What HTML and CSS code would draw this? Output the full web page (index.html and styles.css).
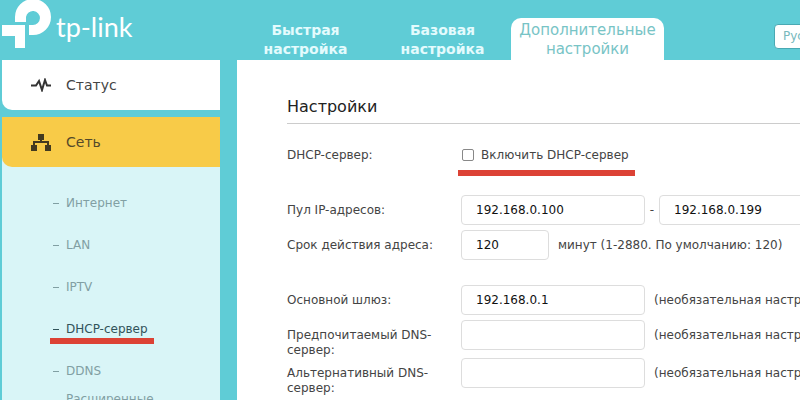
FILE: index.html
```
<!DOCTYPE html>
<html lang="ru">
<head>
    <meta charset="UTF-8">
    <meta name="viewport" content="width=device-width, initial-scale=1.0">
    <title>tp-link - DHCP-сервер</title>
    <link rel="stylesheet" href="styles.css">
</head>
<body>

    <header class="header">
        <a class="logo" href="#">
            <svg class="logo-mark" width="50" height="48" viewBox="0 0 50 48" aria-hidden="true">
                <path d="M13 22V17A18 18 0 1 1 31 35H27V25H31A7 7 0 1 0 24 17V22Z" fill="#fff"/>
                <path d="M0 25H23V48H13V36H0Z" fill="#fff"/>
            </svg>
            <span class="logo-text">tp-link</span>
        </a>
        <nav class="tabs">
            <a class="tab" href="#">Быстрая настройка</a>
            <a class="tab" href="#">Базовая настройка</a>
            <a class="tab active" href="#">Дополнительные настройки</a>
        </nav>
        <button class="language" type="button">Русский</button>
    </header>

    <div class="page">
        <aside class="sidebar">
            <a class="menu-item" href="#">
                <svg width="20" height="14" viewBox="0 0 20 14" aria-hidden="true">
                    <path d="M0 7.500H5L8 3L11 12L14 2L16 7.500H20" fill="none" stroke="#333" stroke-width="2"/>
                </svg>
                Статус
            </a>
            <div class="menu-group">
                <a class="menu-item open" href="#">
                    <svg width="20" height="18" viewBox="0 0 20 18" aria-hidden="true">
                        <path d="M10 5V9M3 13V9H17V13" fill="none" stroke="#433a20" stroke-width="2"/>
                        <path d="M7 1H13V7H7ZM0 12H6V18H0ZM14 12H20V18H14Z" fill="#433a20"/>
                    </svg>
                    Сеть
                </a>
                <ul class="submenu">
                    <li><a href="#">Интернет</a></li>
                    <li><a href="#">LAN</a></li>
                    <li><a href="#">IPTV</a></li>
                    <li class="current"><a href="#">DHCP-сервер</a></li>
                    <li><a href="#">DDNS</a></li>
                    <li class="long"><a href="#">Расширенные настройки</a></li>
                </ul>
            </div>
        </aside>

        <main class="content">
            <h1>Настройки</h1>
            <form>
                <div class="row row-spaced">
                    <span class="label">DHCP-сервер:</span>
                    <label class="check marked"><input type="checkbox"> Включить DHCP-сервер</label>
                </div>
                <div class="row">
                    <label class="label" for="pool-start">Пул IP-адресов:</label>
                    <input class="field" id="pool-start" type="text" value="192.168.0.100">
                    <span class="dash">-</span>
                    <input class="field" type="text" value="192.168.0.199" aria-label="Конец пула">
                </div>
                <div class="row row-spaced">
                    <label class="label" for="lease">Срок действия адреса:</label>
                    <input class="field short" id="lease" type="text" value="120">
                    <span class="note">минут (1-2880. По умолчанию: 120)</span>
                </div>
                <div class="row">
                    <label class="label" for="gateway">Основной шлюз:</label>
                    <input class="field" id="gateway" type="text" value="192.168.0.1">
                    <span class="note">(необязательная настройка)</span>
                </div>
                <div class="row">
                    <label class="label" for="dns1">Предпочитаемый DNS-сервер:</label>
                    <input class="field" id="dns1" type="text">
                    <span class="note">(необязательная настройка)</span>
                </div>
                <div class="row">
                    <label class="label" for="dns2">Альтернативный DNS-сервер:</label>
                    <input class="field" id="dns2" type="text">
                    <span class="note">(необязательная настройка)</span>
                </div>
            </form>
        </main>
    </div>

</body>
</html>
```
FILE: styles.css
```
* {
    box-sizing: border-box;
}
body {
    margin: 0;
    height: 100vh;
    display: flex;
    flex-direction: column;
    overflow: hidden;
    background: #5fccd6;
    color: #444;
    font-family: Verdana, "DejaVu Sans", sans-serif;
    font-size: 12px;
    line-height: 15px;
}
a {
    color: inherit;
    text-decoration: none;
}
.header {
    display: flex;
    flex: none;
    height: 60px;
    white-space: nowrap;
}
.logo {
    display: flex;
    flex: none;
    width: 237px;
    padding-left: 2px;
    gap: 4px;
    color: #fff;
}
.logo-mark {
    flex: none;
}
.logo-text {
    padding-top: 12px;
    font-family: Lato, sans-serif;
    font-size: 27px;
    line-height: 30px;
}
.tabs {
    display: flex;
    flex: none;
    align-items: flex-end;
}
.tab {
    width: 137px;
    height: 42px;
    padding-top: 3px;
    color: #e4fbfd;
    font-size: 14px;
    font-weight: bold;
    line-height: 19px;
    text-align: center;
    white-space: normal;
}
.tab.active {
    width: 153px;
    border-radius: 10px 10px 0 0;
    background: #fff;
    color: #78c4c6;
    font-size: 15px;
    font-weight: normal;
}
.language {
    flex: none;
    width: 90px;
    height: 25px;
    margin: 24px 0 0 110px;
    padding: 0 8px;
    border: 1px solid #4aa9b3;
    border-radius: 4px;
    background: #fff;
    color: #78b9bd;
    font: inherit;
    text-align: left;
}
.page {
    display: flex;
    flex: 1;
    gap: 17px;
    min-height: 0;
    padding-left: 2px;
}
.sidebar {
    display: flex;
    flex: none;
    flex-direction: column;
    gap: 7px;
    width: 218px;
}
.menu-item {
    display: flex;
    flex: none;
    align-items: center;
    gap: 15px;
    height: 50px;
    padding-left: 29px;
    border-radius: 0 0 0 10px;
    background: #fff;
    color: #444;
    font-size: 14px;
}
.menu-item.open {
    background: #f8cb48;
    color: #54492a;
}
.menu-group {
    flex: 1;
    background: #d9f5f7;
}
.submenu {
    margin: 0;
    padding: 15px 0 0 51px;
    list-style: none;
    color: #819fa3;
}
.submenu li {
    display: flex;
    align-items: center;
    gap: 7px;
    height: 42px;
}
.submenu li::before {
    content: "";
    width: 6px;
    height: 1px;
    background: currentColor;
}
.submenu a {
    width: 90px;
}
.submenu .current {
    position: relative;
    color: #31535a;
}
.submenu .current::after,
.marked::after {
    content: "";
    position: absolute;
    left: -3px;
    right: -6px;
    top: 30px;
    height: 6px;
    background: #dc4235;
}
.submenu .current::after {
    right: auto;
    width: 104px;
}
.submenu .long {
    align-items: flex-start;
}
.submenu .long::before {
    background: transparent;
}
.content {
    flex: 1;
    min-width: 0;
    padding: 35px 0 0 50px;
    overflow: hidden;
    background: #fff;
}
h1 {
    margin: 0 0 16px;
    padding-bottom: 4px;
    border-bottom: 1px solid #ccc;
    color: #222;
    font-size: 16px;
    font-weight: normal;
    line-height: 24px;
}
.row {
    display: flex;
    align-items: flex-start;
    min-height: 35px;
    white-space: nowrap;
}
.row-spaced {
    margin-bottom: 20px;
}
.label {
    flex: none;
    width: 174px;
    padding: 8px 24px 0 0;
    white-space: normal;
}
.check {
    position: relative;
    display: flex;
    align-items: center;
    gap: 7px;
    height: 30px;
}
.check input {
    appearance: none;
    width: 12px;
    height: 12px;
    margin: 0 0 0 1px;
    border: 1px solid #888;
    border-radius: 2px;
    background: #fff;
}
.check input:checked {
    background: #5fccd6;
}
.field {
    flex: none;
    width: 184px;
    height: 30px;
    padding: 0 14px;
    border: 1px solid #ddd;
    border-radius: 4px;
    background: #fff;
    color: #111;
    font: inherit;
}
.field.short {
    width: 88px;
}
.dash {
    flex: none;
    width: 14px;
    padding-top: 8px;
    text-align: center;
}
.note {
    padding: 8px 0 0 9px;
}
```
